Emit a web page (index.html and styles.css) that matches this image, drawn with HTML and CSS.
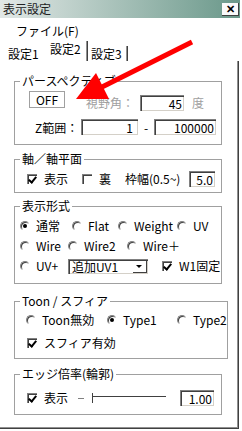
FILE: index.html
```html
<!DOCTYPE html>
<html lang="ja">
<head>
  <meta charset="UTF-8">
  <title>表示設定</title>
  <link rel="stylesheet" href="styles.css">
</head>
<body>
  <div class="dialog">
    <div class="titlebar">
      <span class="title">表示設定</span>
      <span class="close">✕</span>
    </div>
    <div class="menubar"><span>ファイル(F)</span></div>
    <div class="tabs">
      <span class="tab">設定1</span>
      <span class="tab active">設定2</span>
      <span class="tab last">設定3</span>
    </div>

    <div class="panel">
      <fieldset class="group">
        <legend>パースペクティブ</legend>
        <div class="body persp">
          <div class="row-a">
            <span class="btn">OFF</span>
            <span class="fov-label disabled">視野角：</span>
            <span class="field fov">45</span>
            <span class="deg disabled">度</span>
          </div>
          <div class="row-b">
            <span class="z-label">Z範囲：</span>
            <span class="field z-near">1</span>
            <span class="dash">-</span>
            <span class="field z-far">100000</span>
          </div>
        </div>
      </fieldset>

      <fieldset class="group">
        <legend>軸／軸平面</legend>
        <div class="body axis">
          <span class="check on"></span><span class="cap w-show">表示</span>
          <span class="check"></span><span class="cap w-back">裏</span>
          <span class="cap w-frame">枠幅(0.5~)</span>
          <span class="field frame">5.0</span>
        </div>
      </fieldset>

      <fieldset class="group">
        <legend>表示形式</legend>
        <div class="body mode">
          <div class="row">
            <span class="opt w52"><span class="radio on"></span>通常</span>
            <span class="opt w46"><span class="radio"></span>Flat</span>
            <span class="opt w59"><span class="radio"></span>Weight</span>
            <span class="opt"><span class="radio"></span>UV</span>
          </div>
          <div class="row">
            <span class="opt w48"><span class="radio"></span>Wire</span>
            <span class="opt w59"><span class="radio"></span>Wire2</span>
            <span class="opt"><span class="radio"></span>Wire＋</span>
          </div>
          <div class="row">
            <span class="opt w48"><span class="radio"></span>UV+</span>
            <span class="combo"><span class="combo-text">追加UV1</span><span class="combo-btn"></span></span>
            <span class="check on"></span><span class="cap">W1固定</span>
          </div>
        </div>
      </fieldset>

      <fieldset class="group">
        <legend>Toon / スフィア</legend>
        <div class="body toon">
          <div class="row r1">
            <span class="opt w81"><span class="radio"></span>Toon無効</span>
            <span class="opt w70"><span class="radio on"></span>Type1</span>
            <span class="opt"><span class="radio"></span>Type2</span>
          </div>
          <div class="row r2">
            <span class="check on"></span><span class="cap">スフィア有効</span>
          </div>
        </div>
      </fieldset>

      <fieldset class="group">
        <legend>エッジ倍率(輪郭)</legend>
        <div class="body edge">
          <span class="check on"></span><span class="cap w-show2">表示</span>
          <span class="slider">
            <span class="slider-min"></span>
            <span class="slider-thumb"></span>
            <span class="slider-track"></span>
          </span>
          <span class="field edge-val">1.00</span>
        </div>
      </fieldset>
    </div>

    <svg class="pointer" width="242" height="431" viewBox="0 0 242 431">
      <line x1="192" y1="42" x2="100" y2="88" stroke="#f00" stroke-width="5"/>
      <polygon points="76,99 96,73 109,99" fill="#f00"/>
    </svg>
  </div>
</body>
</html>
```

FILE: styles.css
```css
* {
  box-sizing: border-box;
}

body {
  margin: 0;
  background: #fff;
  color: #000;
  font: 12px/14px "Noto Sans CJK JP", sans-serif;
}

.dialog {
  position: relative;
  width: 242px;
  height: 431px;
  overflow: hidden;
}

.titlebar {
  display: flex;
  align-items: center;
  height: 18px;
  margin-right: 2px;
  padding-left: 3px;
  background: linear-gradient(to right, #e2e8e6, #6a988a);
}

.title {
  color: #222;
}

.close {
  display: flex;
  align-items: center;
  justify-content: center;
  width: 17px;
  height: 13px;
  margin-left: auto;
  margin-right: 1px;
  background: #fafafa;
  border-right: 1px solid #404040;
  border-bottom: 1px solid #404040;
  font-size: 11px;
  font-weight: bold;
  line-height: 1;
}

.menubar {
  height: 22px;
  padding: 6px 0 0 16px;
}

.tabs {
  display: flex;
  align-items: flex-end;
  height: 21px;
  padding-left: 2px;
}

.tab {
  height: 17px;
  padding-top: 3px;
}

.tab:first-child {
  width: 44px;
  padding-left: 6px;
}

.tab.active {
  width: 42px;
  height: 20px;
  padding-top: 1px;
  padding-left: 4px;
  border-right: 1px solid #404040;
  box-shadow: inset -1px 0 #909090;
}

.tab.last {
  width: 40px;
  height: 15px;
  padding-top: 1px;
  padding-left: 3px;
  border-right: 1px solid #404040;
  box-shadow: inset -1px 0 #909090;
}

.panel {
  width: 239px;
  height: 368px;
  padding: 13px 0 0 14px;
  border-right: 1px solid #404040;
  border-bottom: 1px solid #404040;
  box-shadow: inset -1px -1px #909090;
}

.group {
  width: 208px;
  margin: 0 0 7px;
  padding: 0;
  border: 1px solid #a0a0a0;
}

.group:nth-child(2) {
  margin-bottom: 6px;
}

.group:nth-child(3) {
  margin-bottom: 10px;
}

.group:nth-child(4) {
  margin-bottom: 8px;
}

.group legend {
  margin-left: 5px;
  padding: 0 2px;
  line-height: 14px;
}

.disabled {
  color: #a0a0a0;
}

.field {
  height: 16px;
  padding-right: 3px;
  text-align: right;
  line-height: 15px;
  border-top: 1px solid #808080;
  border-left: 1px solid #808080;
  box-shadow: inset 1px 1px #404040, inset -1px -1px #d4d0c8;
}

/* パースペクティブ */
.persp {
  height: 56px;
}

.row-a,
.row-b {
  display: flex;
  align-items: flex-start;
}

.row-a {
  height: 25px;
}

.btn {
  width: 36px;
  height: 17px;
  margin: 3px 0 0 14px;
  border: 1px solid #a0a0a0;
  text-align: center;
  line-height: 15px;
}

.fov-label {
  width: 54px;
  margin: 8px 0 0 21px;
}

.fov {
  width: 44px;
  margin-top: 7px;
  padding-right: 2px;
}

.deg {
  margin: 8px 0 0 8px;
}

.z-label {
  width: 46px;
  margin: 8px 0 0 20px;
}

.z-near {
  width: 57px;
  margin-top: 6px;
  padding-right: 5px;
}

.dash {
  width: 16px;
  margin-top: 8px;
  text-align: center;
}

.z-far {
  width: 62px;
  margin-top: 6px;
  padding-right: 2px;
}

/* checkboxes and radios */
.check,
.radio {
  position: relative;
  flex: none;
  width: 10px;
  height: 10px;
  border-top: 1px solid #808080;
  border-left: 1px solid #808080;
  box-shadow: inset 1px 1px #404040;
}

.radio {
  border-right: 1px solid transparent;
  border-bottom: 1px solid transparent;
  border-radius: 50%;
  margin-right: 6px;
}

.radio.on::after {
  content: '';
  position: absolute;
  left: 2px;
  top: 2px;
  width: 4px;
  height: 4px;
  border-radius: 50%;
  background: #000;
}

.check.on::after {
  content: '';
  position: absolute;
  left: 2px;
  top: 0;
  width: 3px;
  height: 6px;
  border-right: 2px solid #000;
  border-bottom: 2px solid #000;
  transform: rotate(40deg);
}

.cap {
  margin-left: 7px;
}

/* 軸／軸平面 */
.axis {
  display: flex;
  align-items: center;
  height: 26px;
  padding-left: 12px;
}

.w-show {
  width: 38px;
}

.w-back {
  width: 26px;
}

.w-frame {
  width: 64px;
  margin-left: 0;
}

.frame {
  width: 26px;
  padding-right: 2px;
}

/* 表示形式 */
.mode {
  height: 70px;
  padding: 3px 0 0 5px;
}

.row {
  display: flex;
  align-items: center;
  height: 20px;
}

.opt {
  display: flex;
  align-items: center;
  flex: none;
}

.w46 { width: 46px; }
.w48 { width: 48px; }
.w52 { width: 52px; }
.w59 { width: 59px; }
.w70 { width: 70px; }
.w81 { width: 81px; }

.combo {
  display: flex;
  align-items: center;
  width: 80px;
  height: 15px;
  margin-right: 14px;
  padding-left: 3px;
  border-top: 1px solid #808080;
  border-left: 1px solid #808080;
  box-shadow: inset 1px 1px #404040, inset -1px -1px #d4d0c8;
}

.combo-text {
  flex: 1;
}

.combo-btn {
  position: relative;
  width: 14px;
  height: 12px;
  margin-right: 1px;
  border-right: 1px solid #404040;
  border-bottom: 1px solid #404040;
}

.combo-btn::after {
  content: '';
  position: absolute;
  left: 3px;
  top: 4px;
  border-left: 3px solid transparent;
  border-right: 3px solid transparent;
  border-top: 3px solid #000;
}

/* Toon / スフィア */
.toon {
  height: 50px;
  padding: 1px 0 0 11px;
}

.toon .r1 {
  height: 22px;
}

.toon .r2 {
  height: 24px;
  padding-left: 1px;
}

/* エッジ倍率 */
.edge {
  display: flex;
  align-items: center;
  height: 33px;
  padding: 3px 0 2px 12px;
}

.w-show2 {
  width: 34px;
}

.slider {
  display: flex;
  align-items: center;
  width: 88px;
  height: 12px;
}

.slider-min {
  width: 6px;
  height: 1px;
  margin-right: 8px;
  background: #808080;
}

.slider-thumb {
  width: 1px;
  height: 10px;
  background: #404040;
}

.slider-track {
  flex: 1;
  height: 1px;
  margin-top: -4px;
  background: #404040;
}

.edge-val {
  width: 34px;
  margin-left: 14px;
  padding-right: 2px;
}

.pointer {
  position: absolute;
  left: 0;
  top: 0;
  pointer-events: none;
}
```
